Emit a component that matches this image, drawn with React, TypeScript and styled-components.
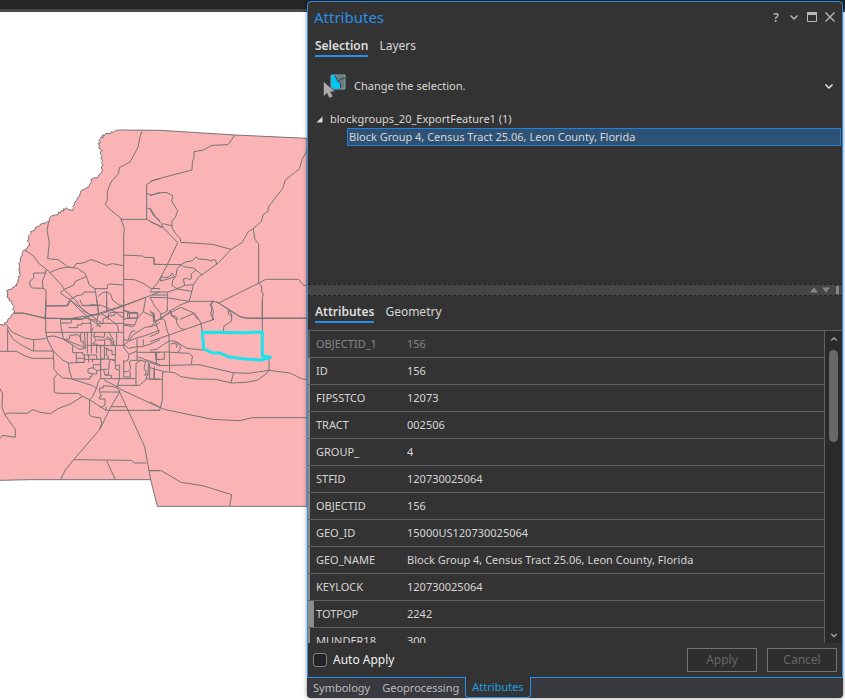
import React, { useState } from "react";
import styled, { createGlobalStyle, css } from "styled-components";

const GlobalStyle = createGlobalStyle`
  * { box-sizing: border-box; }
  body { margin: 0; background: #fff; }
  button, input { font: inherit; color: inherit; }
`;

const colors = {
  pane: "#333333",
  accent: "#2a8fe6",
  line: "#606060",
  text: "#d6d6d6",
  muted: "#858585",
};

const Workspace = styled.div`
  display: grid;
  grid-template-columns: minmax(0, 307fr) minmax(0, 538fr);
  height: 100vh;
  min-height: 480px;
  overflow: hidden;
  background: linear-gradient(#252525 0 9px, #48494d 9px 12px, #ffffff 12px);
  font-family: "Noto Sans", "Open Sans", sans-serif;
  font-size: 11px;
  line-height: 18px;
  color: ${colors.text};
`;

const MapView = styled.main`
  min-width: 0;
  min-height: 0;
  overflow: hidden;
`;

const MapDrawing = styled.svg`
  display: block;
  width: 100%;
  height: 100%;
`;

const Pane = styled.aside`
  display: flex;
  flex-direction: column;
  min-width: 0;
  min-height: 0;
  margin: 1px 2px 2px 0;
  border-radius: 4px;
  background: #383a3f;
  box-shadow: 0 0 4px rgba(0, 0, 0, 0.45);
`;

const PaneBody = styled.div`
  display: flex;
  flex-direction: column;
  flex: 1;
  min-height: 0;
  border: 1px solid ${colors.accent};
  border-radius: 4px 4px 0 0;
  background: ${colors.pane};
`;

const TitleBar = styled.header`
  display: flex;
  align-items: center;
  justify-content: space-between;
  height: 30px;
  padding: 0 4px 0 6px;
`;

const Title = styled.h1`
  margin: 0;
  font-size: 15px;
  line-height: 20px;
  font-weight: 400;
  color: ${colors.accent};
`;

const TitleActions = styled.div`
  display: flex;
  gap: 2px;
  font-size: 12px;
  font-weight: 600;
`;

const IconButton = styled.button`
  display: grid;
  place-items: center;
  width: 16px;
  height: 16px;
  padding: 0;
  border: 0;
  background: none;
  color: #b8b8b8;
`;

const Tabs = styled.nav<{ $lower?: boolean }>`
  display: flex;
  gap: 11px;
  padding: ${(p) => (p.$lower ? "7px" : "5px 7px 0")};
`;

const Tab = styled.button<{ $active?: boolean }>`
  padding: 0;
  border: 0;
  border-bottom: 2px solid ${(p) => (p.$active ? colors.accent : "transparent")};
  background: none;
  font-size: 12px;
  line-height: 18px;
  font-weight: ${(p) => (p.$active ? 600 : 400)};
  color: ${(p) => (p.$active ? "#dedede" : colors.text)};
`;

const SelectionMenu = styled.button`
  display: flex;
  align-items: center;
  gap: 7px;
  height: 30px;
  margin-top: 14px;
  padding: 0 5px 0 15px;
  border: 0;
  background: none;
  text-align: left;
`;

const MenuLabel = styled.span`
  flex: 1;
`;

const MenuArrow = styled.span`
  display: grid;
  place-items: center;
  width: 16px;
  height: 16px;
  color: #e6e6e6;
`;

const Tree = styled.div`
  flex: 1;
  min-height: 60px;
  padding: 9px 1px 0 8px;
`;

const TreeParent = styled.button`
  display: flex;
  align-items: center;
  gap: 7px;
  padding: 0;
  border: 0;
  background: none;
`;

const TreeItem = styled.button`
  display: block;
  width: calc(100% - 31px);
  height: 18px;
  margin-left: 31px;
  padding: 0 1px;
  overflow: hidden;
  border: 1px solid #237fd8;
  background: #2e5275;
  line-height: 16px;
  text-align: left;
  white-space: nowrap;
`;

const Splitter = styled.div`
  display: flex;
  align-items: center;
  justify-content: flex-end;
  gap: 6px;
  height: 12px;
  padding-right: 3px;
  border: 1px dashed #222;
  border-width: 1px 0;
  background: #464646;
`;

const Grip = styled.span`
  width: 3px;
  height: 8px;
  background: #858585;
`;

const TableArea = styled.section`
  display: flex;
  flex: none;
  height: calc(45vh - 2px);
  border-top: 1px solid ${colors.line};
  overflow: hidden;
`;

const TableClip = styled.div`
  flex: 1;
  min-width: 0;
  overflow: hidden;
`;

const Table = styled.table`
  width: 100%;
  border-collapse: separate;
  border-spacing: 0;
  table-layout: fixed;
`;

const Row = styled.tr<{ $readOnly?: boolean }>`
  height: 27px;
  color: ${(p) => (p.$readOnly ? colors.muted : colors.text)};
`;

const cell = css`
  padding: 0;
  overflow: hidden;
  border-bottom: 1px solid ${colors.line};
  font-weight: 400;
  line-height: 18px;
  text-align: left;
  white-space: nowrap;
`;

const FieldName = styled.th<{ $marked?: boolean; $readOnly?: boolean }>`
  ${cell}
  width: 99px;
  padding-left: 8px;
  box-shadow: inset ${(p) => (p.$marked ? 6 : 2)}px 0
    ${(p) => (p.$readOnly ? "#5c5c5c" : "#8d8d8d")};
`;

const FieldValue = styled.td`
  ${cell}
`;

const ScrollTrack = styled.div`
  display: flex;
  flex-direction: column;
  align-items: center;
  width: 18px;
  border-left: 1px solid ${colors.line};
  background: #2a2a2a;
`;

const ScrollRun = styled.div`
  flex: 1;
  width: 9px;
  padding-top: 3px;
`;

const ScrollThumb = styled.div`
  height: 92px;
  border-radius: 5px;
  background: #686868;
`;

const Footer = styled.footer`
  display: flex;
  align-items: center;
  gap: 10px;
  height: 34px;
  padding: 0 5px;
  font-size: 12px;
`;

const AutoApply = styled.label`
  display: flex;
  align-items: center;
  gap: 6px;
  margin-right: auto;
  color: #f0f0f0;
`;

const CheckBox = styled.input`
  appearance: none;
  width: 14px;
  height: 14px;
  margin: 0;
  border: 1px solid #858585;
  border-radius: 3px;
  background: #242528;
  &:checked { background: ${colors.accent}; }
`;

const PushButton = styled.button`
  width: 70px;
  height: 24px;
  padding: 0;
  border: 1px solid #747474;
  background: #2e2e2e;
  color: #666666;
`;

const DockTabs = styled.nav`
  display: flex;
  height: 20px;
`;

const DockTab = styled.button<{ $active?: boolean }>`
  height: 20px;
  padding: 0 6px;
  border: 0;
  background: none;
  font-size: 11px;
  line-height: 20px;
  color: #bcbcbc;
  ${(p) =>
    p.$active &&
    css`
      height: 21px;
      margin-top: -1px;
      border: 1px solid ${colors.accent};
      border-top: 0;
      border-radius: 0 0 4px 4px;
      background: ${colors.pane};
      color: #1ba1e8;
    `}
`;

const coast =
  "M0 973 12 976 14 968 22 966 24 957 32 953 34 945 42 940 44 932 38 928 43 920 36 912 34 904 27 901 28 895 22 893 23 878 20 872 27 869 35 868 37 863 43 862 45 857 51 857 49 851 55 847 53 839 58 835 54 831 62 824 58 819 61 813 56 812 59 799 57 791 62 783 61 774 66 768 67 758 71 751 78 750 84 738 89 736 87 727 82 723 87 714 84 710 93 701 92 695 104 691 107 682 119 678 122 672 138 668 142 664 149 663 148 655 154 648 164 645 174 644 176 636 181 639 184 631 190 634 191 626 197 629 199 623 205 629 218 631 221 622 218 619 224 613 224 606 230 602 233 593 239 589 240 581 244 571 256 567 259 563 267 560 269 553 274 546 273 539 280 534 293 533 297 524 302 521 307 512 304 501 309 495 304 487 309 482 302 475 307 467 301 462 302 454 307 451 297 445 298 436 294 430 302 428 297 421 301 416 304 410 310 414 308 404 314 407 317 400 331 401 334 395 341 397 347 391 360 390 480 391 705 405 921 415";

/* Boundary lines of each quarter of the county, with the offset of its sheet. */
const sheets: { x: number; y: number; d: string }[] = [
  {
    x: 0,
    y: 330,
    d: `M426 64 420 80 414 112 390 156 358 173 356 190 333 216 322 245 322 270 316 284 336 304 362 324 373 355 371 380V630
      M362 328H440V224L460 211 480 206 M440 250 453 255 480 249 M440 295H451L466 319 480 332 M440 328 480 349
      M146 334 141 362 148 397 143 446 174 449 196 464 203 471 220 473 229 461 249 459 273 449 290 454 318 466 338 461 370 467
      M76 421 101 438 116 460 148 485 185 526 195 542 227 571 250 603 272 614 295 613
      M148 488 174 477 203 471 232 475 256 491 268 525 285 536H322V525L330 522 370 525
      M137 480V490L127 513 129 535 138 540V590L134 625 M136 489H101V505L89 514 90 528 98 534 129 535
      M258 500 226 514 222 525 193 538 180 548 196 560 210 568 231 557 248 554 252 546H285
      M138 588 202 586 208 569 M285 536 293 586 296 613 M208 569 247 597 292 630
      M291 587H245 M295 559 306 549 320 545 332 552 338 570 357 585 370 587 M320 545V606
      M40 609H68L135 625 245 626 370 587 437 562 480 545
      M370 435 428 438 433 442 462 443V463H480 M370 508 403 509 430 520 452 535 480 536
      M324 630V618L343 616 346 607 M383 610H412V625H383Z M371 600 391 607 410 607`,
  },
  {
    x: 450,
    y: 330,
    d: `M255 75 234 104 186 106 160 120 132 125V144L127 156 126 180 45 201 0 214
      M472 120 456 149 449 176 406 210 398 235 356 290 354 304 340 313 334 334 312 354 295 365 276 398 243 418 205 459 145 502 130 525 125 546 117 575 90 585 60 603 32 629
      M310 354 314 387 326 402V520L335 528V545L340 552 337 566V630
      M0 257 22 249 48 247 68 257 65 273 83 302 76 323 66 332V352L75 369 91 386 92 397 187 403 243 418
      M0 297 10 315 35 341 38 352 28 350 M38 341 66 347 M0 335 39 352 60 374 83 398 47 474 22 520 0 544
      M12 443V463L93 464 106 456 128 452 138 441 146 447 173 449 185 454 187 449 197 450 200 464
      M93 464 100 470 130 474 138 479 123 493 125 505 118 509 112 505 100 507 104 526 130 524
      M138 481 158 495 M93 465 82 475 77 500 68 512 66 527 81 536 104 526
      M66 489 73 501 54 507 31 513 34 500 48 503 60 499 66 489 M0 546H54L81 537 125 544 M6 555H52
      M0 562 50 563 117 574H190L206 579 325 520 347 508H446L462 527 472 524
      M52 547V603L32 614 M0 562 15 590 32 610V630 M0 609H11L14 630
      M60 601 64 615 80 621 82 630 M90 628 130 611 145 630
      M190 574 182 589 190 602 187 630 M206 579 269 619 294 625H472 M235 601V612L245 617V630`,
  },
  {
    x: 0,
    y: 900,
    d: `M42 40H72L135 54 207 56 252 49 296 44 371 18 437-8
      M137 0V96L143 120 160 153 189 181 205 189
      M17 72 36 96 75 114 101 119 137 116 142 110 162 108 192 118 248 140 253 146 238 148 224 139 190 118
      M23 82V153 M23 90 40 119 68 137 99 153H160V178 M101 119V153
      M0 154H50L75 168 97 175H160 M161 175 162 208 173 221 188 234 213 236 280 258 289 266 278 290 269 299
      M172 222 162 234 163 277 174 280H235L249 290 269 299 318 331H480
      M0 266 8 282 6 322 15 345 35 373 46 388V412L8 406 0 416
      M15 344 25 339 81 340 99 329 120 337 151 341 174 326 213 311 246 290
      M269 299 268 344 276 350 302 354 305 370 299 387 M182 538 196 510 221 479 299 389 333 320 359 276
      M359 276 434 440 452 539 M221 479 394 481 404 489H439 M320 483 346 539 M447 512H480
      M333 320H381 M299 276 304 289 298 291V297H315V315L304 322 297 319 M299 276V264H310V257L336 259 355 265 359 276 M302 276H357
      M318 331V320 M359 267 392 282 480 323
      M138 97H371 M138 18H202L212 3 M212 0 236 27 273 59 302 80 M181 58 183 80 190 116 M181 58H214V68 M214 58 248 59 253 54 270 58 272 72 M183 69H214
      M240 0 247 16H296 M290 0 296 44
      M205 83H232V75H245V70H273V97 M190 118 209 117V106L236 104 242 116V124H250V134L255 146
      M242 99V121 M253 97 256 145 M262 97V160 M274 97V160 M285 97 281 109 288 120 278 132H290V160
      M281 109 312 112 315 98 M290 120H314V137H290 M314 116 330 119 337 136 M320 110 332 116 343 137 M327 97 341 122V137 M350 98V137
      M260 136H371 M218 136V158H249V165H290V179 M229 160V187H253V165 M229 175H253 M253 178H302 M266 165V187 M278 175V187 M253 187 205 189 209 215 216 236
      M216 237H270V229H276V220L264 219V207L277 203 290 211V222H276 M290 211H302V177H324 M280 204V194H302
      M302 137V234L294 247 289 267 M313 137V177H302 M313 145H324V151H336V164H346 M320 145V165H313 M324 165V177L332 184 327 188V208H302
      M324 177 346 180 M346 137V182 M337 181 346 183V207L358 210V238 M346 195 352 197 359 194V208 M311 210 315 226 325 224V213 M302 236H408
      M315 225 334 226V236 M312 240 358 263
      M358 238 352 260 M371 180V215H382L392 207 388 185 395 181H412 M371 187 384 180 387 163 372 144 371 134 M388 231H371V216 M390 213 391 231 388 236
      M352 256H418L437 240 444 219 M408 256V190L423 180 M371 0V136 M371 30 384 38H413V54H389L371 58 M389 42 388 55
      M371 75 398 80 404 75 371 72 M404 75 411 57 430 35 437-5 M430 35 445 43 460 49V67
      M480 90 435 107 410 114 386 123 371 136 M371 132 385 145 412 140 411 153 387 163 M411 153V180L437 184 432 205 439 216 434 226 447 222
      M411 116V139 M430 118V137 M430 138 450 133 480 119 M411 140H430 M387 123 400 104 433 83 468 76 480 66
      M371 120 384 120 394 95 405 92 M411 157H480 M449 190V237 M463 200V237 M440 237H480 M467 158V179H480
      M412 170 434 178 480 194 M437 181 446 187 444 219
      M272 14 304 16 330 27 350 40 371 54 M320 0V37 M296 44 290 61 304 68 M304 42 322 51 352 76 356 96
      M272 59 287 60 293 71 309 71V56L325 51V40L341 37H370 M280 82 273 97 M288 80 293 75 302 81 M309 70H371`,
  },
  {
    x: 450,
    y: 900,
    d: `M0 31 8 40 15 63 27 98 0 110 M12 40 15 64 35 55 M0 82 15 68 35 52 92 22 134 40 152 67 157 96 M32 52 45 62 49 84 57 107 59 215
      M0 125 192 58 182 43 187 20 180 15 190 0
      M60 31 65 48 79 58 81 71 92 86 108 89 M235 30 245 41 244 64 222 78 220 95
      M0 151 20 148 37 136 59 122 76 124 111 145 159 150 M62 132 81 128 92 139 88 153 80 158 118 160 127 168 124 193
      M75 131 82 135 79 143 M0 157 50 156 80 158 M20 158V178H43V158 M20 178 17 195 M0 187 25 197 147 194 249 218 295 220 357 211 419 219 457 237 472 238
      M0 203 42 215 74 218 93 230 139 237 195 238 245 249 289 247 321 241 348 222 357 211V177
      M251 218 243 248 M39 216 37 230V300L29 331H0 M0 238H37 M12 204V237
      M0 306 42 328 186 358 270 362 306 353H472 M337 0V96 M200 5 235 28 269 50 285 54H472
      M0 512H34L93 547 158 557 245 584 239 618`,
  },
];

function CountyMap() {
  return (
    <MapDrawing viewBox="0 0 921 2100" preserveAspectRatio="xMinYMin slice" role="img" aria-label="Block groups map">
      <path d={`${coast}V1519H472L452 1439H90L0 1441`} fill="#fbb4b6" stroke="#777575" strokeWidth="3" />
      <g fill="none" stroke="#777575" strokeWidth="3" strokeLinejoin="round">
        {sheets.map((sheet) => (
          <path key={`${sheet.x}-${sheet.y}`} d={sheet.d} transform={`translate(${sheet.x} ${sheet.y})`} />
        ))}
      </g>
      <path
        d="M607 997 731 998 787 996V1067L811 1072 783 1080 729 1076 684 1070 660 1059 636 1058 611 1047Z"
        fill="none"
        stroke="#17e5eb"
        strokeWidth="9"
        strokeLinejoin="round"
      />
    </MapDrawing>
  );
}

function Chevron({ up = false, size = 10 }: { up?: boolean; size?: number }) {
  return (
    <svg width={size} height={size} viewBox="0 0 10 10" fill="none" stroke="currentColor" strokeWidth="1.5" aria-hidden>
      <path d={up ? "M1.5 7 5 3.5 8.5 7" : "M1.5 3.5 5 7 8.5 3.5"} />
    </svg>
  );
}

function SelectionIcon() {
  return (
    <svg width="24" height="26" viewBox="0 0 24 26" aria-hidden>
      <path d="M8 2h14v14H8z" fill="#777" stroke="#6faeba" />
      <path d="M8.500 2.500h4.500l1 4.500 4 4-1 4.500H8.500z" fill="#00c5f7" />
      <path d="m12 2.500 2.500 5.500 3 2.500v5M15 9l2-2.500 5-1.500" fill="none" stroke="#254b59" />
      <path d="M0.500 8.500v15L4 20.300l2.300 5 3.700-1.700-2.400-4.800h4.800z" fill="#aaa" stroke="#333" strokeWidth="0.500" />
    </svg>
  );
}

const fields: [string, string][] = [
  ["OBJECTID_1", "156"],
  ["ID", "156"],
  ["FIPSSTCO", "12073"],
  ["TRACT", "002506"],
  ["GROUP_", "4"],
  ["STFID", "120730025064"],
  ["OBJECTID", "156"],
  ["GEO_ID", "15000US120730025064"],
  ["GEO_NAME", "Block Group 4, Census Tract 25.06, Leon County, Florida"],
  ["KEYLOCK", "120730025064"],
  ["TOTPOP", "2242"],
  ["MUNDER18", "300"],
];

export default function App() {
  const [autoApply, setAutoApply] = useState(false);

  return (
    <>
      <GlobalStyle />
      <Workspace>
        <MapView>
          <CountyMap />
        </MapView>
        <Pane>
          <PaneBody>
            <TitleBar>
              <Title>Attributes</Title>
              <TitleActions>
                <IconButton aria-label="Help">?</IconButton>
                <IconButton aria-label="Pane options"><Chevron /></IconButton>
                <IconButton aria-label="Maximize">
                  <svg width="10" height="10" viewBox="0 0 10 10" fill="none" stroke="currentColor" aria-hidden>
                    <path d="M.5 1.500h9v8h-9z" /><path d="M0 1.500h10" strokeWidth="3" />
                  </svg>
                </IconButton>
                <IconButton aria-label="Close">
                  <svg width="10" height="10" viewBox="0 0 10 10" stroke="currentColor" strokeWidth="1.300" aria-hidden>
                    <path d="m.5.5 9 9m0-9-9 9" />
                  </svg>
                </IconButton>
              </TitleActions>
            </TitleBar>
            <Tabs>
              <Tab $active>Selection</Tab>
              <Tab>Layers</Tab>
            </Tabs>
            <SelectionMenu>
              <SelectionIcon />
              <MenuLabel>Change the selection.</MenuLabel>
              <MenuArrow><Chevron /></MenuArrow>
            </SelectionMenu>
            <Tree>
              <TreeParent>
                <svg width="7" height="7" viewBox="0 0 7 7" aria-hidden><path d="M6.500.5v6h-6z" fill="#ddd" /></svg>
                blockgroups_20_ExportFeature1 (1)
              </TreeParent>
              <TreeItem>Block Group 4, Census Tract 25.06, Leon County, Florida</TreeItem>
            </Tree>
            <Splitter>
              <svg width="20" height="6" viewBox="0 0 20 6" fill="#858585" aria-hidden>
                <path d="M0 5.500 4 .5l4 5zM12 .5h8l-4 5z" />
              </svg>
              <Grip />
            </Splitter>
            <Tabs $lower>
              <Tab $active>Attributes</Tab>
              <Tab>Geometry</Tab>
            </Tabs>
            <TableArea>
              <TableClip>
                <Table>
                  <tbody>
                    {fields.map(([name, value], i) => (
                      <Row key={name} $readOnly={i === 0}>
                        <FieldName scope="row" $marked={name === "TOTPOP"} $readOnly={i === 0}>{name}</FieldName>
                        <FieldValue>{value}</FieldValue>
                      </Row>
                    ))}
                  </tbody>
                </Table>
              </TableClip>
              <ScrollTrack>
                <IconButton aria-label="Scroll up"><Chevron up size={8} /></IconButton>
                <ScrollRun><ScrollThumb /></ScrollRun>
                <IconButton aria-label="Scroll down"><Chevron size={8} /></IconButton>
              </ScrollTrack>
            </TableArea>
            <Footer>
              <AutoApply>
                <CheckBox type="checkbox" checked={autoApply} onChange={(e) => setAutoApply(e.target.checked)} />
                Auto Apply
              </AutoApply>
              <PushButton disabled>Apply</PushButton>
              <PushButton disabled>Cancel</PushButton>
            </Footer>
          </PaneBody>
          <DockTabs>
            <DockTab>Symbology</DockTab>
            <DockTab>Geoprocessing</DockTab>
            <DockTab $active>Attributes</DockTab>
          </DockTabs>
        </Pane>
      </Workspace>
    </>
  );
}
